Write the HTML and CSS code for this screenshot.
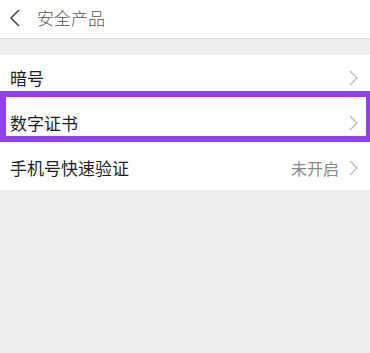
FILE: index.html
```html
<!DOCTYPE html>
<html>
<head>
<meta charset="utf-8">
<link rel="stylesheet" href="styles.css">
</head>
<body>
<div class="page">
  <header class="topbar">
    <svg class="back" width="12" height="20" viewBox="0 0 12 20"><path d="M10 2 L2 10 L10 18" fill="none" stroke="#444" stroke-width="1.5"/></svg>
    <span class="title">安全产品</span>
  </header>
  <div class="gap"></div>
  <ul class="list">
    <li class="row"><span class="label">暗号</span><span class="right"><svg class="chev" width="9" height="16" viewBox="0 0 9 16"><path d="M1 1 L8 8 L1 15" fill="none" stroke="#bbb" stroke-width="1.4"/></svg></span></li>
    <li class="row"><span class="label">数字证书</span><span class="right"><svg class="chev" width="9" height="16" viewBox="0 0 9 16"><path d="M1 1 L8 8 L1 15" fill="none" stroke="#bbb" stroke-width="1.4"/></svg></span><div class="highlight"></div></li>
    <li class="row"><span class="label">手机号快速验证</span><span class="right"><span class="value">未开启</span><svg class="chev" width="9" height="16" viewBox="0 0 9 16"><path d="M1 1 L8 8 L1 15" fill="none" stroke="#bbb" stroke-width="1.4"/></svg></span></li>
  </ul>
</div>
</body>
</html>
```
FILE: styles.css
```css
html, body { margin: 0; padding: 0; }
body {
  background: #ededed;
  font-family: "Noto Sans CJK SC", "Noto Sans", sans-serif;
  width: 370px;
  height: 353px;
  overflow: hidden;
}
.topbar {
  height: 38px;
  background: #fff;
  border-bottom: 1px solid #dedede;
  display: flex;
  align-items: center;
  padding-left: 9px;
  padding-bottom: 4px;
  box-sizing: content-box;
  height: 34px;
}
.back { margin-right: 16px; margin-top: 1px; }
.title { font-size: 17px; color: #555; font-weight: 300; }
.gap { height: 16px; }
.list { list-style: none; margin: 0; padding: 0; background: #fff; }
.row {
  position: relative;
  height: 45px;
  display: flex;
  align-items: center;
  justify-content: space-between;
  padding: 0 12px 0 10px;
}
.label { font-size: 17px; color: #1e1e1e; }
.right { display: flex; align-items: center; gap: 10px; }
.value { font-size: 16px; color: #8a8a8a; }
.highlight {
  position: absolute;
  left: 0; right: 0;
  top: -9px; height: 51px;
  box-sizing: border-box;
  border: 6px solid #9240ec;
  border-right-width: 4px;
}
```
